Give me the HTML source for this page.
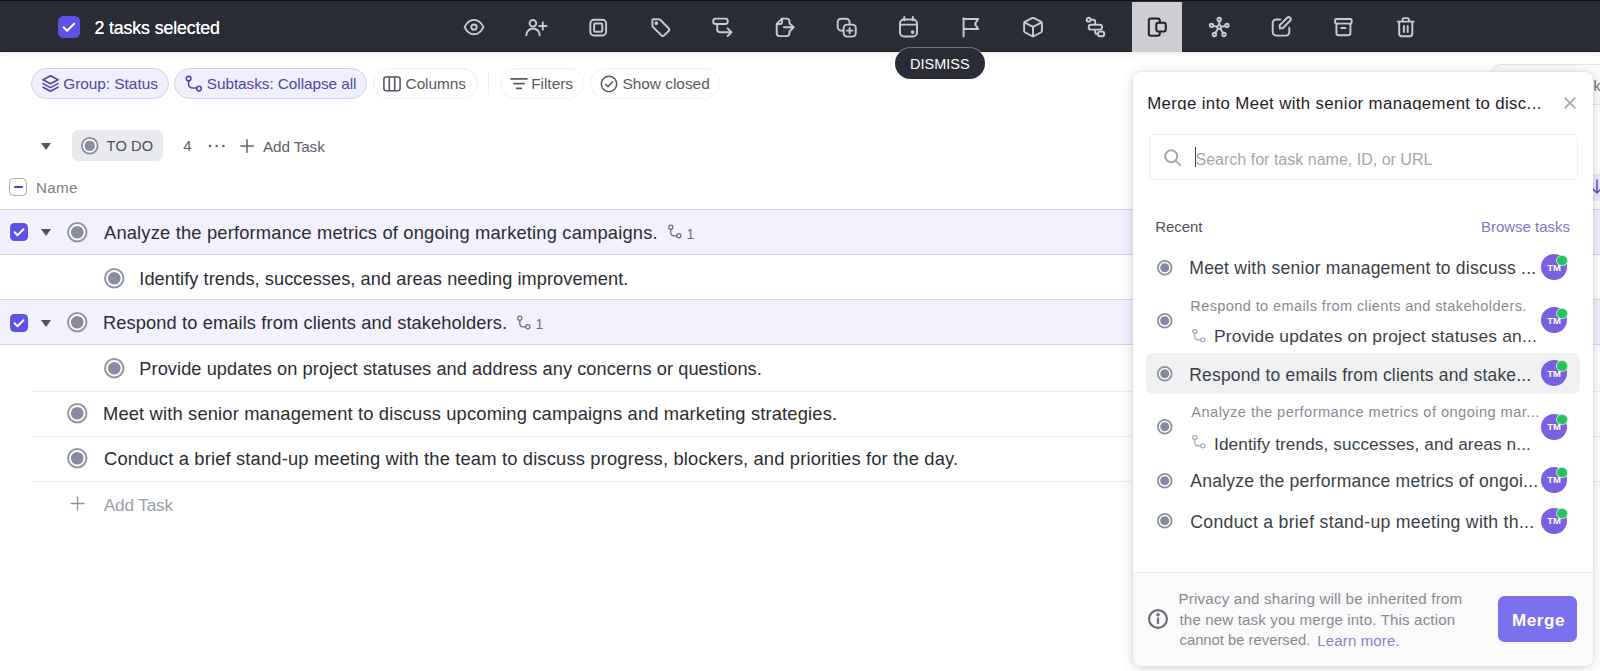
<!DOCTYPE html>
<html><head><meta charset="utf-8"><title>Tasks</title>
<style>
*{box-sizing:border-box;margin:0;padding:0}
html,body{width:1600px;height:671px;overflow:hidden;background:#fff}
body{font-family:"Liberation Sans",sans-serif;color:#2a2e34;position:relative}
.t{position:absolute;white-space:pre}
#topbar{position:absolute;left:0;top:0;width:1600px;height:51.5px;background:#2a2d35;border-top:1.5px solid #0e0f12;border-bottom:1px solid #1b1d22;box-shadow:0 1px 7px rgba(0,0,0,.10)}
.sel{position:absolute;left:58px;top:15.5px;width:22px;height:22px;border-radius:5.5px;background:#5d51e8}
.ti{position:absolute;top:15px;width:24px;height:24px;fill:none;stroke-linecap:round;stroke-linejoin:round}
#hl{position:absolute;left:1132.2px;top:1.5px;width:50px;height:50.1px;background:#cdced2}
#dismiss{position:absolute;left:895px;top:48px;width:90px;height:30.5px;border-radius:15.5px;background:#2a2d35;box-shadow:0 0 0 1px rgba(255,255,255,.35)}
.pill{position:absolute;top:68px;height:30.5px;border-radius:15.5px;border:1px solid #f0f0f3;background:#fff}
.pill.on{background:#f0effc;border-color:#d3d1ee}
.pi{position:absolute;fill:none;stroke-linecap:round;stroke-linejoin:round}
.row{position:absolute;left:0;width:1600px;height:46.2px}
.row.s{background:#f2f1fd;border-top:1.2px solid #d6d5e8;border-bottom:1.2px solid #d6d5e8}
.ln{position:absolute;left:31.5px;width:1569px;height:1px;background:#eeeef1}
.st{position:absolute;border-radius:50%;background:#fff}
.st i{position:absolute;border-radius:50%}
.cb{position:absolute;border-radius:4.5px;background:#5d51e8}
.cb svg{display:block}
.car{position:absolute;width:0;height:0;border-left:5.5px solid transparent;border-right:5.5px solid transparent;border-top:7px solid #50555d}
#panel{position:absolute;left:1133px;top:71.5px;width:459.5px;height:594.5px;background:#fff;border-radius:7.5px;box-shadow:0 2px 14px rgba(0,0,0,.16),0 0 3px rgba(0,0,0,.10)}
#foot{position:absolute;left:1133px;top:572px;width:459.5px;height:94px;background:#fafafb;border-top:1px solid #eeeef0;border-radius:0 0 7.5px 7.5px}
#search{position:absolute;left:1148.5px;top:133.5px;width:429px;height:46px;border:1px solid #eeeef1;border-radius:5px;background:#fff}
#hi{position:absolute;left:1146px;top:353px;width:433.5px;height:40.8px;border-radius:7px;background:#f0f1f3}
#merge{position:absolute;left:1498.3px;top:596px;width:79.2px;height:46.3px;border-radius:6.5px;background:#7b70ee}
.av{position:absolute;width:26px;height:26px;border-radius:50%;background:#7a5fe0}
.dot{position:absolute;width:11.5px;height:11.5px;border-radius:50%;background:#23c45f;border:1.5px solid #cdeedd}
.titleclip{position:absolute;left:1140px;top:85px;width:410px;height:25.8px;overflow:hidden}
</style></head><body>

<!-- ===== task list ===== -->
<div class="pill on" style="left:31px;width:138px"></div>
<div class="pill on" style="left:174.2px;width:193px"></div>
<div class="pill" style="left:373px;width:104.6px"></div>
<div style="position:absolute;left:488.2px;top:72px;width:1px;height:22px;background:#f0f0f2"></div>
<div class="pill" style="left:499.7px;width:84px"></div>
<div class="pill" style="left:590.4px;width:130px"></div>
<svg class="pi" style="left:40.5px;top:74px" width="19" height="19" viewBox="0 0 19 19" stroke="#4f479e" stroke-width="1.6"><path d="M9.5 1.8l7.5 4-7.5 4-7.5-4z"/><path d="M2 9.6l7.5 4 7.5-4"/><path d="M2 13.3l7.5 4 7.5-4"/></svg>
<svg class="pi" style="left:184.5px;top:74.5px" width="18" height="18" viewBox="0 0 18 18" stroke="#4f479e" stroke-width="1.6"><circle cx="3.6" cy="3.6" r="2.3"/><path d="M3.6 5.9v3.3a3.8 3.8 0 0 0 3.8 3.8h4.3"/><circle cx="14" cy="13.6" r="2.3"/></svg>
<svg class="pi" style="left:382.5px;top:76px" width="18" height="16" viewBox="0 0 18 16" stroke="#565b63" stroke-width="1.6"><rect x=".9" y="1" width="16.2" height="13.8" rx="2.2"/><path d="M6.3 1v13.8M11.7 1v13.8"/></svg>
<svg class="pi" style="left:509.5px;top:76px" width="18" height="16" viewBox="0 0 18 16" stroke="#565b63" stroke-width="1.7"><path d="M1 2.8h16M3.9 7.6h10.2M6.8 12.4h4.4"/></svg>
<svg class="pi" style="left:599.5px;top:74.5px" width="18" height="18" viewBox="0 0 18 18" stroke="#565b63" stroke-width="1.5"><circle cx="9" cy="9" r="7.7"/><path d="M5.6 9.3l2.4 2.4 4.6-4.9"/></svg>

<!-- group header -->
<div class="car" style="left:41.3px;top:142.5px"></div>
<div style="position:absolute;left:72.2px;top:130.3px;width:90.8px;height:30.8px;border-radius:6.5px;background:#e9eaed"></div>
<svg style="position:absolute;left:79.65px;top:136.05px" width="19.5" height="19.5" viewBox="0 0 19.5 19.5"><circle cx="9.75" cy="9.75" r="7.85" fill="#fff" stroke="#8a8c93" stroke-width="1.8"/><circle cx="9.75" cy="9.75" r="5.2" fill="#878ca0"/></svg>
<svg style="position:absolute;left:208px;top:142.5px" width="18" height="6" viewBox="0 0 18 6"><circle cx="2" cy="3" r="1.3" fill="#5d626a"/><circle cx="8.7" cy="3" r="1.3" fill="#5d626a"/><circle cx="15.4" cy="3" r="1.3" fill="#5d626a"/></svg>
<svg style="position:absolute;left:239.5px;top:139px" width="14" height="14" viewBox="0 0 14 14" stroke="#5d626a" stroke-width="1.5" stroke-linecap="round"><path d="M7 .8v12.4M.8 7h12.4"/></svg>
<!-- name header -->
<div style="position:absolute;left:9.3px;top:177.8px;width:18px;height:18px;border-radius:4.5px;border:1.5px solid #a9abb1;background:#fff"></div>
<div style="position:absolute;left:14px;top:186px;width:8.6px;height:2px;border-radius:1px;background:#4a3fc4"></div>
<div class="row s" style="top:208.5px"></div><div class="row s" style="top:299.3px"></div><div class="ln" style="top:390.5px"></div><div class="ln" style="top:435.5px"></div><div class="ln" style="top:480.5px"></div><div class="ln" style="top:345.2px;background:#dcdbea;display:none"></div><div class="cb" style="left:9.5px;top:223px;width:18px;height:18px"><svg viewBox="0 0 18 18" width="18" height="18"><path d="M4.6 9.3l2.9 2.9L13.4 6.2" fill="none" stroke="#fff" stroke-width="2" stroke-linecap="round" stroke-linejoin="round"/></svg></div><div class="car" style="left:41.3px;top:229.3px"></div><svg style="position:absolute;left:66.45px;top:220.95px" width="22.5" height="22.5" viewBox="0 0 22.5 22.5"><circle cx="11.25" cy="11.25" r="9.25" fill="#fff" stroke="#96979d" stroke-width="2"/><circle cx="11.25" cy="11.25" r="6.3" fill="#878ca0"/></svg><svg style="position:absolute;left:102.75px;top:266.75px" width="22.5" height="22.5" viewBox="0 0 22.5 22.5"><circle cx="11.25" cy="11.25" r="9.25" fill="#fff" stroke="#96979d" stroke-width="2"/><circle cx="11.25" cy="11.25" r="6.3" fill="#878ca0"/></svg><div class="cb" style="left:9.5px;top:313.5px;width:18px;height:18px"><svg viewBox="0 0 18 18" width="18" height="18"><path d="M4.6 9.3l2.9 2.9L13.4 6.2" fill="none" stroke="#fff" stroke-width="2" stroke-linecap="round" stroke-linejoin="round"/></svg></div><div class="car" style="left:41.3px;top:319.8px"></div><svg style="position:absolute;left:66.45px;top:311.45px" width="22.5" height="22.5" viewBox="0 0 22.5 22.5"><circle cx="11.25" cy="11.25" r="9.25" fill="#fff" stroke="#96979d" stroke-width="2"/><circle cx="11.25" cy="11.25" r="6.3" fill="#878ca0"/></svg><svg style="position:absolute;left:102.75px;top:357.05px" width="22.5" height="22.5" viewBox="0 0 22.5 22.5"><circle cx="11.25" cy="11.25" r="9.25" fill="#fff" stroke="#96979d" stroke-width="2"/><circle cx="11.25" cy="11.25" r="6.3" fill="#878ca0"/></svg><svg style="position:absolute;left:66.45px;top:401.75px" width="22.5" height="22.5" viewBox="0 0 22.5 22.5"><circle cx="11.25" cy="11.25" r="9.25" fill="#fff" stroke="#96979d" stroke-width="2"/><circle cx="11.25" cy="11.25" r="6.3" fill="#878ca0"/></svg><svg style="position:absolute;left:66.45px;top:446.95px" width="22.5" height="22.5" viewBox="0 0 22.5 22.5"><circle cx="11.25" cy="11.25" r="9.25" fill="#fff" stroke="#96979d" stroke-width="2"/><circle cx="11.25" cy="11.25" r="6.3" fill="#878ca0"/></svg><svg style="position:absolute;left:667px;top:224.3px" width="16" height="16" viewBox="0 0 16 16" fill="none" stroke="#6b7078" stroke-width="1.25" stroke-linecap="round"><circle cx="3.8" cy="3.3" r="2.1"/><path d="M3.8 5.4v3.1a3.3 3.3 0 0 0 3.3 3.3h2.6"/><circle cx="11.8" cy="11.8" r="2.1"/></svg><svg style="position:absolute;left:516px;top:314.8px" width="16" height="16" viewBox="0 0 16 16" fill="none" stroke="#6b7078" stroke-width="1.25" stroke-linecap="round"><circle cx="3.8" cy="3.3" r="2.1"/><path d="M3.8 5.4v3.1a3.3 3.3 0 0 0 3.3 3.3h2.6"/><circle cx="11.8" cy="11.8" r="2.1"/></svg>
<svg style="position:absolute;left:70px;top:495.5px" width="15" height="15" viewBox="0 0 15 15" stroke="#8d929b" stroke-width="1.3" stroke-linecap="round"><path d="M7.5 1v13M1 7.5h13"/></svg>
<!-- hidden stuff behind panel at far right -->
<div style="position:absolute;left:1491px;top:63.5px;width:130px;height:41px;border-radius:10px;border:1px solid #e4e4e8;background:#fbfbfc"></div><span class="t" style="left:1593.5px;top:77px;font-size:14px;line-height:18px;color:#6b7078">ks</span>
<div style="position:absolute;left:1578px;top:174px;width:30px;height:27px;border-radius:6px;background:#ebe9fb"></div><svg style="position:absolute;left:1590px;top:178px" width="14" height="18" viewBox="0 0 14 18" fill="none" stroke="#5a4fcf" stroke-width="1.5" stroke-linecap="round" stroke-linejoin="round"><path d="M7 2v13M2.5 10.5L7 15l4.5-4.5"/></svg>
<span class="t " style="left:63.2px;top:74.25px;font-size:15.43px;line-height:20px;color:#4f479e;letter-spacing:-0.037px;">Group: Status</span>
<span class="t " style="left:206.8px;top:74.28px;font-size:15.35px;line-height:20px;color:#4f479e;letter-spacing:-0.064px;">Subtasks: Collapse all</span>
<span class="t " style="left:405.6px;top:74.26px;font-size:15.4px;line-height:20px;color:#565b63;letter-spacing:-0.072px;">Columns</span>
<span class="t " style="left:531.2px;top:74.25px;font-size:15.44px;line-height:20px;color:#565b63;letter-spacing:-0.034px;">Filters</span>
<span class="t " style="left:622.4px;top:74.24px;font-size:15.46px;line-height:20px;color:#565b63;letter-spacing:-0.022px;">Show closed</span>
<span class="t " style="left:106.6px;top:137.23px;font-size:14.63px;line-height:19px;color:#4a4f57;letter-spacing:0.132px;">TO DO</span>
<span class="t " style="left:183.3px;top:136.1px;font-size:15px;line-height:20px;color:#5d626a;">4</span>
<span class="t " style="left:263px;top:136.5px;font-size:15.31px;line-height:20px;color:#5d626a;letter-spacing:-0.124px;">Add Task</span>
<span class="t " style="left:35.9px;top:178.21px;font-size:15.26px;line-height:20px;color:#7c8089;letter-spacing:0.267px;">Name</span>
<span class="t " style="left:104px;top:220.95px;font-size:18.34px;line-height:24px;color:#2a2d33;letter-spacing:0.171px;">Analyze the performance metrics of ongoing marketing campaigns.</span>
<span class="t " style="left:686.5px;top:224.65px;font-size:14px;line-height:18px;color:#6b7078;">1</span>
<span class="t " style="left:139.3px;top:266.71px;font-size:18.16px;line-height:24px;color:#2a2d33;letter-spacing:0.081px;">Identify trends, successes, and areas needing improvement.</span>
<span class="t " style="left:103px;top:310.98px;font-size:18.25px;line-height:24px;color:#2a2d33;letter-spacing:0.115px;">Respond to emails from clients and stakeholders.</span>
<span class="t " style="left:535.5px;top:314.65px;font-size:14px;line-height:18px;color:#6b7078;">1</span>
<span class="t " style="left:139.3px;top:357.2px;font-size:18.18px;line-height:24px;color:#2a2d33;letter-spacing:0.087px;">Provide updates on project statuses and address any concerns or questions.</span>
<span class="t " style="left:103px;top:401.65px;font-size:18.33px;line-height:24px;color:#2a2d33;letter-spacing:0.156px;">Meet with senior management to discuss upcoming campaigns and marketing strategies.</span>
<span class="t " style="left:104px;top:446.64px;font-size:18.35px;line-height:24px;color:#2a2d33;letter-spacing:0.157px;">Conduct a brief stand-up meeting with the team to discuss progress, blockers, and priorities for the day.</span>
<span class="t " style="left:103.8px;top:494.33px;font-size:17.23px;line-height:22px;color:#9a9fa8;letter-spacing:-0.174px;">Add Task</span>

<!-- ===== top action bar ===== -->
<div id="topbar"></div>
<div id="hl"></div>
<div class="sel"><svg viewBox="0 0 22 22" width="22" height="22"><path d="M5.6 11.3l3.5 3.5L16.2 7.7" fill="none" stroke="#fff" stroke-width="2.1" stroke-linecap="round" stroke-linejoin="round"/></svg></div>
<svg class="ti" style="left:462px" viewBox="0 0 24 24" stroke="#c8cacf" stroke-width="1.95"><path d="M2.6 12.2C5 7 8.3 4.9 12 4.9s7 2.1 9.4 7.3c-2.4 5-5.7 7.1-9.4 7.1s-7-2.1-9.4-7.1z"/><circle cx="12" cy="12.1" r="2.7"/></svg>
<svg class="ti" style="left:524px" viewBox="0 0 24 24" stroke="#c8cacf" stroke-width="1.95"><circle cx="8.9" cy="8.3" r="3.3"/><path d="M2.3 20.2a6.7 6.7 0 0 1 13.4 0"/><path d="M18.8 7.4v7.2M15.2 11h7.2"/></svg>
<svg class="ti" style="left:586px" viewBox="0 0 24 24" stroke="#c8cacf" stroke-width="1.95"><rect x="4.3" y="4.8" width="15.8" height="15.6" rx="3.6"/><rect x="8.1" y="8.5" width="8.2" height="8.2" rx="1.2"/></svg>
<svg class="ti" style="left:648px" viewBox="0 0 24 24" stroke="#c8cacf" stroke-width="1.95"><path d="M5.2 4.2h5.6a2 2 0 0 1 1.4.6l8.4 8.4a2 2 0 0 1 0 2.8l-4.4 4.4a2 2 0 0 1-2.8 0L5 12a2 2 0 0 1-.6-1.4V5.2a1 1 0 0 1 .8-1z"/><circle cx="8.3" cy="8.2" r=".9" fill="#c8cacf"/></svg>
<svg class="ti" style="left:710px" viewBox="0 0 24 24" stroke="#c8cacf" stroke-width="1.95"><rect x="3.2" y="3.6" width="14.6" height="5.4" rx="2.5"/><path d="M7.2 9v5.2a3 3 0 0 0 3 3H21"/><path d="M17.6 13.4l3.8 3.8-3.8 3.8"/></svg>
<svg class="ti" style="left:772px" viewBox="0 0 24 24" stroke="#c8cacf" stroke-width="1.95"><path d="M17.5 8.4V6.6a3 3 0 0 0-3-3H10L4.7 8.9v9.2a3 3 0 0 0 3 3h6.8a3 3 0 0 0 3-3v-1.8"/><path d="M10 3.8v3.6a1.5 1.5 0 0 1-1.5 1.5H4.9"/><path d="M11.8 12.3h9.7M18.4 9.1l3.3 3.2-3.3 3.2"/></svg>
<svg class="ti" style="left:834px" viewBox="0 0 24 24" stroke="#c8cacf" stroke-width="1.95"><path d="M9.3 15.6H7.2a3.5 3.5 0 0 1-3.5-3.5V7.2a3.5 3.5 0 0 1 3.5-3.5h4.9a3.5 3.5 0 0 1 3.5 3.5v2"/><rect x="9.6" y="9.6" width="12.2" height="12" rx="3.5"/><path d="M15.7 12.9v5.4M13 15.6h5.4"/></svg>
<svg class="ti" style="left:896px" viewBox="0 0 24 24" stroke="#c8cacf" stroke-width="1.95"><rect x="4" y="4.4" width="17" height="17" rx="4"/><path d="M4 9.6h17M8.3 1.9v3.4M16.9 1.9v3.4"/><circle cx="16.6" cy="17" r=".9" fill="#c8cacf"/></svg>
<svg class="ti" style="left:958px" viewBox="0 0 24 24" stroke="#c8cacf" stroke-width="1.95"><path d="M5.6 3.2v18.2"/><path d="M5.6 4h14.6l-3.2 5 3.2 5H5.6"/></svg>
<svg class="ti" style="left:1021px" viewBox="0 0 24 24" stroke="#c8cacf" stroke-width="1.95"><path d="M10.9 3.2q1.1-.6 2.2 0l6.7 3.5q1.1.6 1.1 1.8v7.2q0 1.2-1.1 1.8l-6.7 3.5q-1.1.6-2.2 0l-6.7-3.5q-1.1-.6-1.1-1.8V8.5q0-1.2 1.1-1.8z"/><path d="M3.3 7.4L12 11.8l8.7-4.4M12 11.8v9.6"/></svg>
<svg class="ti" style="left:1083px" viewBox="0 0 24 24" stroke="#c8cacf" stroke-width="1.95"><circle cx="5.6" cy="4.7" r="1.9"/><path d="M7.7 4.7h2.3a2.2 2.2 0 0 1 2.2 2.2v2.6"/><rect x="5.7" y="9.7" width="13.4" height="4.9" rx="2.45"/><path d="M12.2 14.7v2a2.2 2.2 0 0 0 2.2 2.2h.5"/><rect x="15" y="16.5" width="6.3" height="4.8" rx="2.4"/></svg>
<svg class="ti" style="left:1145px" viewBox="0 0 24 24" stroke="#1f2126" stroke-width="2"><rect x="3.8" y="3.5" width="11" height="17.3" rx="2.3"/><rect x="11.3" y="7.7" width="9.5" height="8.9" rx="2" fill="#cdced2"/></svg>
<svg class="ti" style="left:1207px" viewBox="0 0 24 24" stroke="#c8cacf" stroke-width="1.95"><circle cx="12.2" cy="12" r="1.9"/><circle cx="12.2" cy="4.4" r="1.7"/><circle cx="4.5" cy="10.4" r="1.7"/><circle cx="19.9" cy="10.4" r="1.7"/><circle cx="7.4" cy="19.5" r="1.7"/><circle cx="17" cy="19.5" r="1.7"/><path d="M12.2 6.1v4M6.1 10.9l4.2.8M18.3 10.9l-4.2.8M8.3 18l2.8-4.4M16.1 18l-2.8-4.4"/></svg>
<svg class="ti" style="left:1269px" viewBox="0 0 24 24" stroke="#c8cacf" stroke-width="1.95"><path d="M11.4 4.4H7.2a3.5 3.5 0 0 0-3.5 3.5v9.2a3.5 3.5 0 0 0 3.5 3.5h9.6a3.5 3.5 0 0 0 3.5-3.5v-4.3"/><path d="M10.9 13.4l-.3-3 7.6-7.6a2 2 0 0 1 2.9 2.9l-7.4 7.6z"/></svg>
<svg class="ti" style="left:1331px" viewBox="0 0 24 24" stroke="#c8cacf" stroke-width="1.95"><rect x="4.1" y="4" width="16.6" height="4.6" rx="1.3"/><path d="M5.4 8.7v9.4a2.2 2.2 0 0 0 2.2 2.2h9.6a2.2 2.2 0 0 0 2.2-2.2V8.7"/><path d="M10.3 12.9h4.2"/></svg>
<svg class="ti" style="left:1393px" viewBox="0 0 24 24" stroke="#c8cacf" stroke-width="1.95"><path d="M4.7 6.6h16M9.6 6.4V4.6a1.5 1.5 0 0 1 1.5-1.5h3.3a1.5 1.5 0 0 1 1.5 1.5v1.8"/><path d="M6.2 6.8v12a2.5 2.5 0 0 0 2.5 2.5h8.1a2.5 2.5 0 0 0 2.5-2.5v-12"/><path d="M10.9 11v6M14.7 11v6"/></svg>
<div id="dismiss"></div>
<span class="t " style="left:94.5px;top:17.15px;font-size:17.75px;line-height:23px;color:#ffffff;letter-spacing:-0.127px;text-shadow:0 0 .6px #fff">2 tasks selected</span>
<span class="t " style="left:910px;top:54.57px;font-size:14.51px;line-height:19px;color:#ffffff;letter-spacing:0.008px;">DISMISS</span>

<!-- ===== merge panel ===== -->
<div id="panel"></div>
<div id="foot"></div>
<div id="search"></div>
<svg style="position:absolute;left:1163px;top:147.5px" width="19" height="19" viewBox="0 0 19 19" fill="none" stroke="#a6a9af" stroke-width="2" stroke-linecap="round"><circle cx="8.2" cy="8.2" r="6"/><path d="M12.8 12.8l4.3 4.3"/></svg>
<div style="position:absolute;left:1194.5px;top:147px;width:1.3px;height:20px;background:#3a3f46"></div>
<svg style="position:absolute;left:1563.2px;top:95.8px" width="14" height="14" viewBox="0 0 14 14" stroke="#a6a9af" stroke-width="1.8" stroke-linecap="round"><path d="M2.2 2.2l9.6 9.6M11.8 2.2L2.2 11.8"/></svg>
<div id="hi"></div>
<svg style="position:absolute;left:1156.25px;top:259.05px" width="17.5" height="17.5" viewBox="0 0 17.5 17.5"><circle cx="8.75" cy="8.75" r="6.85" fill="#fff" stroke="#8f9198" stroke-width="1.8"/><circle cx="8.75" cy="8.75" r="4.5" fill="#848a9e"/></svg><svg style="position:absolute;left:1156.25px;top:311.65px" width="17.5" height="17.5" viewBox="0 0 17.5 17.5"><circle cx="8.75" cy="8.75" r="6.85" fill="#fff" stroke="#8f9198" stroke-width="1.8"/><circle cx="8.75" cy="8.75" r="4.5" fill="#848a9e"/></svg><svg style="position:absolute;left:1156.25px;top:365.35px" width="17.5" height="17.5" viewBox="0 0 17.5 17.5"><circle cx="8.75" cy="8.75" r="6.85" fill="#fff" stroke="#8f9198" stroke-width="1.8"/><circle cx="8.75" cy="8.75" r="4.5" fill="#848a9e"/></svg><svg style="position:absolute;left:1156.25px;top:417.95px" width="17.5" height="17.5" viewBox="0 0 17.5 17.5"><circle cx="8.75" cy="8.75" r="6.85" fill="#fff" stroke="#8f9198" stroke-width="1.8"/><circle cx="8.75" cy="8.75" r="4.5" fill="#848a9e"/></svg><svg style="position:absolute;left:1156.25px;top:471.55px" width="17.5" height="17.5" viewBox="0 0 17.5 17.5"><circle cx="8.75" cy="8.75" r="6.85" fill="#fff" stroke="#8f9198" stroke-width="1.8"/><circle cx="8.75" cy="8.75" r="4.5" fill="#848a9e"/></svg><svg style="position:absolute;left:1156.25px;top:512.25px" width="17.5" height="17.5" viewBox="0 0 17.5 17.5"><circle cx="8.75" cy="8.75" r="6.85" fill="#fff" stroke="#8f9198" stroke-width="1.8"/><circle cx="8.75" cy="8.75" r="4.5" fill="#848a9e"/></svg><div class="av" style="left:1541.2px;top:254.39999999999998px"></div><div class="dot" style="left:1556.15px;top:254.54999999999995px"></div><div class="av" style="left:1541.2px;top:307.4px"></div><div class="dot" style="left:1556.15px;top:307.54999999999995px"></div><div class="av" style="left:1541.2px;top:360px"></div><div class="dot" style="left:1556.15px;top:360.15px"></div><div class="av" style="left:1541.2px;top:413.7px"></div><div class="dot" style="left:1556.15px;top:413.84999999999997px"></div><div class="av" style="left:1541.2px;top:466.6px"></div><div class="dot" style="left:1556.15px;top:466.75px"></div><div class="av" style="left:1541.2px;top:507.6px"></div><div class="dot" style="left:1556.15px;top:507.75px"></div><svg style="position:absolute;left:1190.8px;top:327.8px" width="16" height="16" viewBox="0 0 16 16" fill="none" stroke="#a3a6ab" stroke-width="1.15" stroke-linecap="round"><circle cx="3.8" cy="3.3" r="2.1"/><path d="M3.8 5.4v3.1a3.3 3.3 0 0 0 3.3 3.3h2.6"/><circle cx="11.8" cy="11.8" r="2.1"/></svg><svg style="position:absolute;left:1190.8px;top:434.3px" width="16" height="16" viewBox="0 0 16 16" fill="none" stroke="#a3a6ab" stroke-width="1.15" stroke-linecap="round"><circle cx="3.8" cy="3.3" r="2.1"/><path d="M3.8 5.4v3.1a3.3 3.3 0 0 0 3.3 3.3h2.6"/><circle cx="11.8" cy="11.8" r="2.1"/></svg>
<svg style="position:absolute;left:1147.3px;top:608px" width="22" height="22" viewBox="0 0 22 22" fill="none" stroke="#686d75" stroke-width="2.2" stroke-linecap="round"><circle cx="11" cy="11" r="8.9"/><path d="M11 10.4v4.8"/><circle cx="11" cy="6.8" r=".7" fill="#686d75"/></svg>
<div id="merge"></div>
<span class="t " style="left:1195.5px;top:148.75px;font-size:16.01px;line-height:21px;color:#a3a8b0;letter-spacing:0.012px;">Search for task name, ID, or URL</span>
<span class="t " style="left:1155.3px;top:217.32px;font-size:14.94px;line-height:19px;color:#4d535b;letter-spacing:-0.036px;">Recent</span>
<span class="t " style="left:1481px;top:217.31px;font-size:14.98px;line-height:19px;color:#8079c6;">Browse tasks</span>
<span class="t " style="left:1189.3px;top:257.43px;font-size:17.52px;line-height:23px;color:#3a3f46;letter-spacing:0.244px;">Meet with senior management to discuss ...</span>
<span class="t " style="left:1190.3px;top:296.56px;font-size:14.55px;line-height:19px;color:#878c94;letter-spacing:0.389px;">Respond to emails from clients and stakeholders.</span>
<span class="t " style="left:1214px;top:325.17px;font-size:17.41px;line-height:23px;color:#3a3f46;letter-spacing:0.185px;">Provide updates on project statuses an...</span>
<span class="t " style="left:1189.3px;top:363.76px;font-size:17.44px;line-height:23px;color:#3a3f46;letter-spacing:0.201px;">Respond to emails from clients and stake...</span>
<span class="t " style="left:1191.3px;top:402.93px;font-size:14.64px;line-height:19px;color:#878c94;letter-spacing:0.443px;">Analyze the performance metrics of ongoing mar...</span>
<span class="t " style="left:1214px;top:432.54px;font-size:17.21px;line-height:22px;color:#3a3f46;letter-spacing:0.107px;">Identify trends, successes, and areas n...</span>
<span class="t " style="left:1190.3px;top:469.53px;font-size:17.52px;line-height:23px;color:#3a3f46;letter-spacing:0.239px;">Analyze the performance metrics of ongoi...</span>
<span class="t " style="left:1190.3px;top:510.68px;font-size:17.65px;line-height:23px;color:#3a3f46;letter-spacing:0.297px;">Conduct a brief stand-up meeting with th...</span>
<span class="t " style="left:1178.5px;top:589.14px;font-size:15.17px;line-height:20px;color:#868b93;letter-spacing:0.179px;">Privacy and sharing will be inherited from</span>
<span class="t " style="left:1179.5px;top:609.87px;font-size:15.1px;line-height:20px;color:#868b93;letter-spacing:0.147px;">the new task you merge into. This action</span>
<span class="t f3a" style="left:1179.5px;top:631.27px;font-size:14.8px;line-height:19px;color:#868b93;">cannot be reversed. </span>
<span class="t " style="left:1317.3px;top:630.69px;font-size:15.04px;line-height:20px;color:#8a82c8;letter-spacing:0.133px;">Learn more.</span>
<span class="t " style="left:1512px;top:609.57px;font-size:17.12px;line-height:22px;color:#ffffff;letter-spacing:0.531px;font-weight:700;">Merge</span>
<span class="t " style="left:1547.2px;top:262.01px;font-size:9.5px;line-height:12px;color:#ffffff;font-weight:700;">TM</span>
<span class="t " style="left:1547.2px;top:315.01px;font-size:9.5px;line-height:12px;color:#ffffff;font-weight:700;">TM</span>
<span class="t " style="left:1547.2px;top:367.61px;font-size:9.5px;line-height:12px;color:#ffffff;font-weight:700;">TM</span>
<span class="t " style="left:1547.2px;top:421.31px;font-size:9.5px;line-height:12px;color:#ffffff;font-weight:700;">TM</span>
<span class="t " style="left:1547.2px;top:474.21px;font-size:9.5px;line-height:12px;color:#ffffff;font-weight:700;">TM</span>
<span class="t " style="left:1547.2px;top:515.21px;font-size:9.5px;line-height:12px;color:#ffffff;font-weight:700;">TM</span>
<div style="position:absolute;left:0;top:0;width:1600px;height:110.2px;overflow:hidden"><span class="t title" style="left:1147.2px;top:93.17px;font-size:16.82px;line-height:22px;color:#1f2227;letter-spacing:0.366px;">Merge into Meet with senior management to disc...</span></div>
</body></html>
